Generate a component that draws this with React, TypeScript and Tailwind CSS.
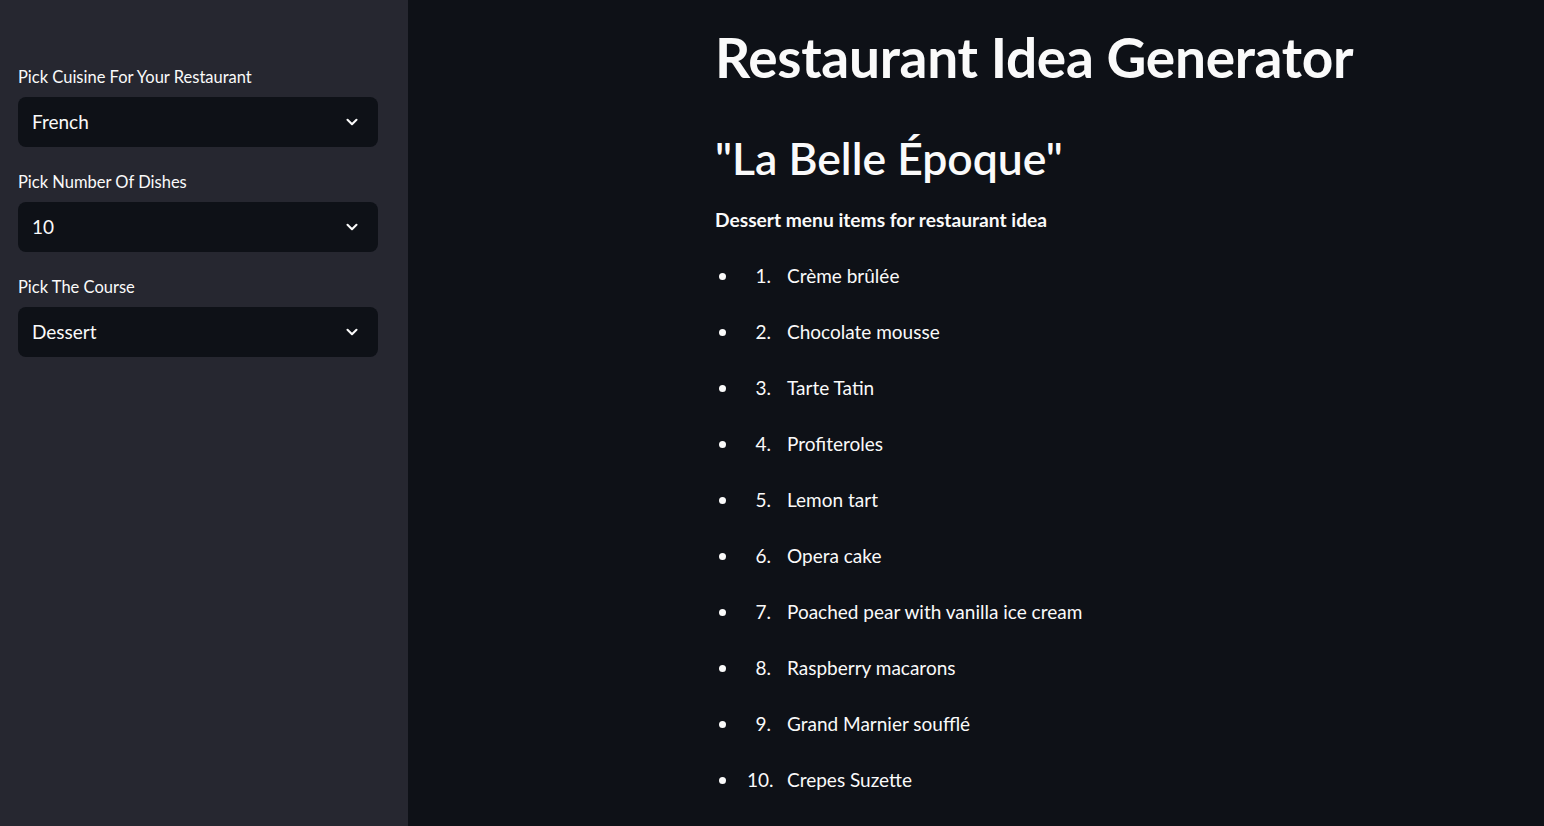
import { ChevronDown } from "lucide-react";

const selects = [
  { label: "Pick Cuisine For Your Restaurant", value: "French" },
  { label: "Pick Number Of Dishes", value: "10" },
  { label: "Pick The Course", value: "Dessert" },
];

const dishes = [
  "Crème brûlée",
  "Chocolate mousse",
  "Tarte Tatin",
  "Profiteroles",
  "Lemon tart",
  "Opera cake",
  "Poached pear with vanilla ice cream",
  "Raspberry macarons",
  "Grand Marnier soufflé",
  "Crepes Suzette",
];

export default function App() {
  return (
    <div
      className="flex h-[826px] w-full overflow-hidden bg-[#0e1117] text-[#fafafa]"
      style={{ fontFamily: "Lato, 'Noto Sans', sans-serif" }}
    >
      <aside className="flex w-[408px] shrink-0 flex-col gap-[24px] bg-[#262730] px-[18px] pt-[66px]">
        {selects.map(({ label, value }) => (
          <div key={label} className="flex flex-col gap-[9px]">
            <label className="text-[16.5px] leading-[22px]">{label}</label>
            <div className="flex h-[50px] w-[360px] items-center justify-between rounded-[8px] bg-[#0e1117] pl-[14px] pr-[17px]">
              <span className="text-[19px]">{value}</span>
              <ChevronDown size={18} strokeWidth={2.8} />
            </div>
          </div>
        ))}
      </aside>

      <main className="flex-1 pl-[307px] pt-[24px]">
        <h1 className="text-[55px] font-bold leading-[66px] tracking-[-0.3px]">
          Restaurant Idea Generator
        </h1>
        <h2 className="mt-[40px] text-[44.5px] font-semibold leading-[56px]">
          "La Belle Époque"
        </h2>
        <p className="mt-[19px] text-[19.2px] font-bold leading-[30px]">
          Dessert menu items for restaurant idea
        </p>
        <ul className="mt-[26px] flex flex-col gap-[26px]">
          {dishes.map((d, i) => (
            <li key={d} className="flex items-center text-[19px] leading-[30px]">
              <span className="flex w-[32px] shrink-0 pl-[4px]">
                <span className="h-[7px] w-[7px] rounded-full bg-[#fafafa]" />
              </span>
              <span className="w-[24px] shrink-0 text-right">{i + 1}.</span>
              <span className="ml-[16px]">{d}</span>
            </li>
          ))}
        </ul>
      </main>
    </div>
  );
}
